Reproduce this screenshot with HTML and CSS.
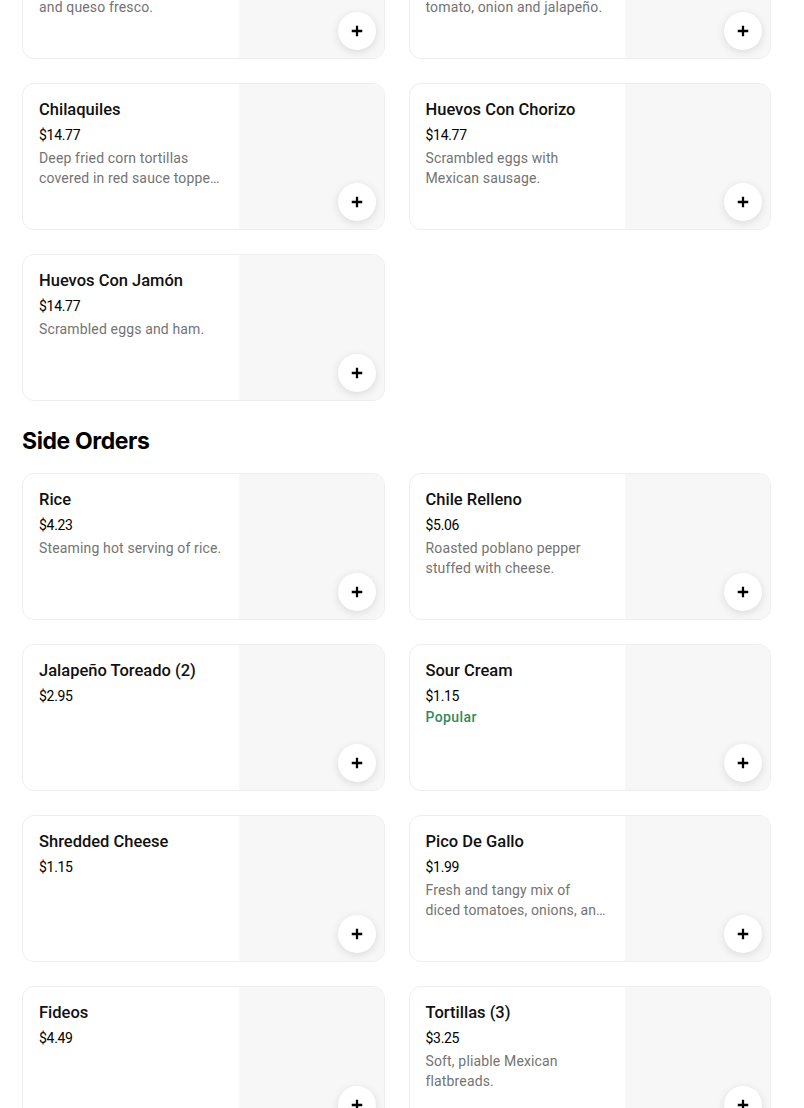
FILE: index.html
```html
<!DOCTYPE html>
<html lang="en">
<head>
<meta charset="utf-8">
<title>Menu</title>
<link rel="stylesheet" href="styles.css">
</head>
<body>
<main class="menu">
  <section class="section">
    <div class="grid">
      <div class="card">
        <div class="info">
          <div class="name">Huevos Rancheros</div>
          <div class="price">$14.77</div>
          <div class="desc">Eggs with ranchero sauce<br>and queso fresco.</div>
        </div>
        <div class="thumb"></div>
        <button class="add" aria-label="Add"><svg viewBox="0 0 16 16" width="14" height="14"><path d="M8 2v12M2 8h12" stroke="#000" stroke-width="2.6" fill="none"/></svg></button>
      </div>
      <div class="card">
        <div class="info">
          <div class="name">Huevos a la Mexicana</div>
          <div class="price">$14.77</div>
          <div class="desc">Scrambled eggs with<br>tomato, onion and jalapeño.</div>
        </div>
        <div class="thumb"></div>
        <button class="add" aria-label="Add"><svg viewBox="0 0 16 16" width="14" height="14"><path d="M8 2v12M2 8h12" stroke="#000" stroke-width="2.6" fill="none"/></svg></button>
      </div>
      <div class="card">
        <div class="info">
          <div class="name">Chilaquiles</div>
          <div class="price">$14.77</div>
          <div class="desc">Deep fried corn tortillas covered in red sauce topped with cheese and sour cream.</div>
        </div>
        <div class="thumb"></div>
        <button class="add" aria-label="Add"><svg viewBox="0 0 16 16" width="14" height="14"><path d="M8 2v12M2 8h12" stroke="#000" stroke-width="2.6" fill="none"/></svg></button>
      </div>
      <div class="card">
        <div class="info">
          <div class="name">Huevos Con Chorizo</div>
          <div class="price">$14.77</div>
          <div class="desc">Scrambled eggs with Mexican sausage.</div>
        </div>
        <div class="thumb"></div>
        <button class="add" aria-label="Add"><svg viewBox="0 0 16 16" width="14" height="14"><path d="M8 2v12M2 8h12" stroke="#000" stroke-width="2.6" fill="none"/></svg></button>
      </div>
      <div class="card">
        <div class="info">
          <div class="name">Huevos Con Jamón</div>
          <div class="price">$14.77</div>
          <div class="desc">Scrambled eggs and ham.</div>
        </div>
        <div class="thumb"></div>
        <button class="add" aria-label="Add"><svg viewBox="0 0 16 16" width="14" height="14"><path d="M8 2v12M2 8h12" stroke="#000" stroke-width="2.6" fill="none"/></svg></button>
      </div>
    </div>
  </section>

  <section class="section">
    <h2 class="heading">Side Orders</h2>
    <div class="grid">
      <div class="card">
        <div class="info">
          <div class="name">Rice</div>
          <div class="price">$4.23</div>
          <div class="desc">Steaming hot serving of rice.</div>
        </div>
        <div class="thumb"></div>
        <button class="add" aria-label="Add"><svg viewBox="0 0 16 16" width="14" height="14"><path d="M8 2v12M2 8h12" stroke="#000" stroke-width="2.6" fill="none"/></svg></button>
      </div>
      <div class="card">
        <div class="info">
          <div class="name">Chile Relleno</div>
          <div class="price">$5.06</div>
          <div class="desc">Roasted poblano pepper stuffed with cheese.</div>
        </div>
        <div class="thumb"></div>
        <button class="add" aria-label="Add"><svg viewBox="0 0 16 16" width="14" height="14"><path d="M8 2v12M2 8h12" stroke="#000" stroke-width="2.6" fill="none"/></svg></button>
      </div>
      <div class="card">
        <div class="info">
          <div class="name">Jalapeño Toreado (2)</div>
          <div class="price">$2.95</div>
        </div>
        <div class="thumb"></div>
        <button class="add" aria-label="Add"><svg viewBox="0 0 16 16" width="14" height="14"><path d="M8 2v12M2 8h12" stroke="#000" stroke-width="2.6" fill="none"/></svg></button>
      </div>
      <div class="card">
        <div class="info">
          <div class="name">Sour Cream</div>
          <div class="price">$1.15</div>
          <div class="tag">Popular</div>
        </div>
        <div class="thumb"></div>
        <button class="add" aria-label="Add"><svg viewBox="0 0 16 16" width="14" height="14"><path d="M8 2v12M2 8h12" stroke="#000" stroke-width="2.6" fill="none"/></svg></button>
      </div>
      <div class="card">
        <div class="info">
          <div class="name">Shredded Cheese</div>
          <div class="price">$1.15</div>
        </div>
        <div class="thumb"></div>
        <button class="add" aria-label="Add"><svg viewBox="0 0 16 16" width="14" height="14"><path d="M8 2v12M2 8h12" stroke="#000" stroke-width="2.6" fill="none"/></svg></button>
      </div>
      <div class="card">
        <div class="info">
          <div class="name">Pico De Gallo</div>
          <div class="price">$1.99</div>
          <div class="desc">Fresh and tangy mix of<br>diced tomatoes, onions, and cilantro.</div>
        </div>
        <div class="thumb"></div>
        <button class="add" aria-label="Add"><svg viewBox="0 0 16 16" width="14" height="14"><path d="M8 2v12M2 8h12" stroke="#000" stroke-width="2.6" fill="none"/></svg></button>
      </div>
      <div class="card">
        <div class="info">
          <div class="name">Fideos</div>
          <div class="price">$4.49</div>
        </div>
        <div class="thumb"></div>
        <button class="add" aria-label="Add"><svg viewBox="0 0 16 16" width="14" height="14"><path d="M8 2v12M2 8h12" stroke="#000" stroke-width="2.6" fill="none"/></svg></button>
      </div>
      <div class="card">
        <div class="info">
          <div class="name">Tortillas (3)</div>
          <div class="price">$3.25</div>
          <div class="desc">Soft, pliable Mexican flatbreads.</div>
        </div>
        <div class="thumb"></div>
        <button class="add" aria-label="Add"><svg viewBox="0 0 16 16" width="14" height="14"><path d="M8 2v12M2 8h12" stroke="#000" stroke-width="2.6" fill="none"/></svg></button>
      </div>
    </div>
  </section>
</main>
</body>
</html>
```
FILE: styles.css
```css
* { box-sizing: border-box; }
html, body { margin: 0; padding: 0; background: #fff; }
body {
  font-family: Roboto, "Liberation Sans", sans-serif;
  color: #000;
  overflow: hidden;
}
.menu {
  margin-top: -88px;
  padding: 0 33px 0 22px;
}
.grid {
  display: grid;
  grid-template-columns: 1fr 1fr;
  column-gap: 24px;
  row-gap: 24px;
}
.section + .section { margin-top: 28px; }
.heading {
  margin: 0 0 20px;
  font-family: Inter, Roboto, sans-serif;
  font-size: 23px;
  line-height: 24px;
  font-weight: 700;
  letter-spacing: -0.4px;
}
.card {
  position: relative;
  display: flex;
  height: 147px;
  border: 1px solid #eeeeee;
  border-radius: 12px;
  overflow: hidden;
  background: #fff;
}
.info {
  flex: 1;
  min-width: 0;
  padding: 16px 16px 0 16px;
}
.thumb {
  width: 145px;
  flex: none;
  background: #f7f7f7;
}
.name {
  font-size: 16.5px;
  line-height: 20px;
  font-weight: 500;
  color: #111;
  margin-bottom: 5px;
}
.price {
  font-size: 14px;
  line-height: 20px;
  letter-spacing: -0.3px;
  margin-bottom: 3px;
}
.desc {
  font-size: 14px;
  line-height: 20px;
  letter-spacing: 0.15px;
  color: #737373;
  display: -webkit-box;
  -webkit-line-clamp: 2;
  -webkit-box-orient: vertical;
  overflow: hidden;
}
.tag {
  font-size: 14px;
  line-height: 16px;
  font-weight: 500;
  color: #2f8a5e;
  margin-top: 1px;
  letter-spacing: 0.4px;
}
.add {
  position: absolute;
  right: 8px;
  bottom: 8px;
  width: 38px;
  height: 38px;
  border: 0;
  border-radius: 50%;
  background: #fff;
  box-shadow: 0 2px 8px rgba(0,0,0,0.12);
  display: flex;
  align-items: center;
  justify-content: center;
  padding: 0;
}
```
